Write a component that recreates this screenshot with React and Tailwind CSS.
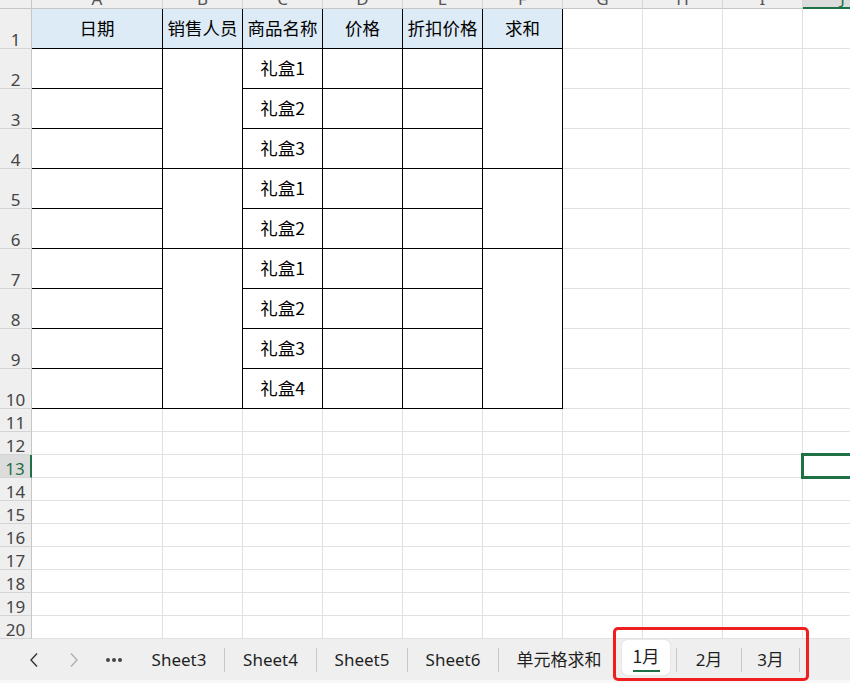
import React from 'react';

const COLS = ['A', 'B', 'C', 'D', 'E', 'F', 'G', 'H', 'I', 'J'];
const HEADINGS = ['日期', '销售人员', '商品名称', '价格', '折扣价格', '求和'];

// rows 2-10: gift box name, plus the merged salesperson / total block that starts on that row
const DATA = [
  { item: '礼盒1', span: 3 },
  { item: '礼盒2' },
  { item: '礼盒3' },
  { item: '礼盒1', span: 2 },
  { item: '礼盒2' },
  { item: '礼盒1', span: 4 },
  { item: '礼盒2' },
  { item: '礼盒3' },
  { item: '礼盒4' },
];

const SPAN = { 2: 'row-span-2', 3: 'row-span-3', 4: 'row-span-4' };

const cjk = "font-['Noto_Sans_CJK_SC',sans-serif]";
const grid = 'border-r border-b border-[#e1e1e1]';
const boxed = 'border-r border-b border-black';

const RowNum = ({ n, active }) => (
  <div
    className={`flex items-end justify-center font-['Noto_Sans',sans-serif] text-[17px] leading-none border-b border-[#d4d4d4] ${
      active
        ? 'bg-[#dcdcdc] text-[#1e7145] border-r-2 border-r-[#1e7145]'
        : 'bg-[#efefef] text-[#444] border-r border-r-[#c6c6c6]'
    }`}
  >
    <span>{n}</span>
  </div>
);

const Cell = ({ children, className = '' }) => (
  <div className={`flex items-center justify-center ${cjk} text-[17.5px] text-black ${className}`}>{children}</div>
);

const Sep = () => <div className="w-px h-[24px] bg-[#c9c9c9]" />;

const Tab = ({ label, w }) => (
  <div className={`${w} flex items-center justify-center font-['Noto_Sans','Noto_Sans_CJK_SC',sans-serif] text-[17px] text-[#1f1f1f]`}>
    {label}
  </div>
);

export default function App() {
  const cells = [];

  // column header strip
  cells.push(<div key="corner" className="bg-[#efefef] border-r border-b border-[#c6c6c6]" />);
  COLS.forEach((c) => {
    const sel = c === 'J';
    cells.push(
      <div
        key={`h${c}`}
        className={`relative overflow-hidden ${
          sel ? 'bg-[#dcdcdc] border-b-2 border-[#1e7145]' : 'bg-[#efefef] border-b border-[#c6c6c6]'
        } border-r border-r-[#d4d4d4]`}
      >
        <span
          className={`absolute inset-x-0 bottom-[1px] text-center font-['Noto_Sans',sans-serif] text-[17px] leading-none ${
            sel ? 'text-[#1e7145]' : 'text-[#555]'
          }`}
        >
          {c}
        </span>
      </div>
    );
  });

  // row 1: headings
  cells.push(<RowNum key="r1" n={1} />);
  HEADINGS.forEach((h) =>
    cells.push(
      <Cell key={`t${h}`} className={`bg-[#ddebf7] ${boxed}`}>
        {h}
      </Cell>
    )
  );
  ['G', 'H', 'I', 'J'].forEach((c) => cells.push(<div key={`1${c}`} className={grid} />));

  // rows 2-10: bordered block
  DATA.forEach((d, i) => {
    const r = i + 2;
    cells.push(<RowNum key={`r${r}`} n={r} />);
    cells.push(<div key={`a${r}`} className={boxed} />);
    if (d.span) cells.push(<div key={`b${r}`} className={`${SPAN[d.span]} ${boxed}`} />);
    cells.push(
      <Cell key={`c${r}`} className={boxed}>
        {d.item}
      </Cell>
    );
    cells.push(<div key={`d${r}`} className={boxed} />);
    cells.push(<div key={`e${r}`} className={boxed} />);
    if (d.span) cells.push(<div key={`f${r}`} className={`${SPAN[d.span]} ${boxed}`} />);
    ['G', 'H', 'I', 'J'].forEach((c) => cells.push(<div key={`${r}${c}`} className={grid} />));
  });

  // rows 11-20: empty sheet
  for (let r = 11; r <= 20; r++) {
    cells.push(<RowNum key={`r${r}`} n={r} active={r === 13} />);
    COLS.forEach((c) => cells.push(<div key={`${r}${c}`} className={grid} />));
  }

  return (
    <div className="relative w-[850px] h-[683px] overflow-hidden bg-white flex flex-col">
      <div className="relative grid grid-cols-[32px_131px_80px_80px_80px_80px_80px_80px_80px_80px_80px] grid-rows-[9px_repeat(10,40px)_repeat(10,23px)] w-[883px] shrink-0">
        {cells}
        {/* active cell J13 */}
        <div className="absolute left-[801px] top-[453px] w-[90px] h-[26px] border-[3px] border-[#1e7145]" />
      </div>

      {/* sheet tabs */}
      <div className="flex items-center h-[41px] bg-[#efefef] shrink-0">
        <div className="w-[14px]" />
        <div className="w-[40px] flex justify-center">
          <svg width="10" height="16" viewBox="0 0 10 16">
            <polyline points="8,1.5 2,8 8,14.5" fill="none" stroke="#333" strokeWidth="1.4" />
          </svg>
        </div>
        <div className="w-[40px] flex justify-center">
          <svg width="10" height="16" viewBox="0 0 10 16">
            <polyline points="2,1.5 8,8 2,14.5" fill="none" stroke="#b0b0b0" strokeWidth="1.4" />
          </svg>
        </div>
        <div className="w-[40px] flex justify-center gap-[2px]">
          <span className="w-[4px] h-[4px] rounded-full bg-[#444]" />
          <span className="w-[4px] h-[4px] rounded-full bg-[#444]" />
          <span className="w-[4px] h-[4px] rounded-full bg-[#444]" />
        </div>
        <Tab label="Sheet3" w="w-[90px]" />
        <Sep />
        <Tab label="Sheet4" w="w-[91px]" />
        <Sep />
        <Tab label="Sheet5" w="w-[90px]" />
        <Sep />
        <Tab label="Sheet6" w="w-[90px]" />
        <Sep />
        <Tab label="单元格求和" w="w-[120px]" />
        <div className="w-[57px] self-stretch pt-px">
          <div className="ml-[3px] w-[48px] h-[35px] bg-white rounded-[5px] shadow-[0_0_1px_rgba(0,0,0,0.25)] flex flex-col items-center pt-[6px]">
            <span className={`${cjk} text-[17.5px] leading-[20px] text-[#1f1f1f]`}>1月</span>
            <div className="mt-[4px] w-[27px] h-[2px] bg-[#1e7145]" />
          </div>
        </div>
        <Sep />
        <Tab label="2月" w="w-[64px]" />
        <Sep />
        <Tab label="3月" w="w-[57px]" />
        <Sep />
      </div>
      <div className="h-[3px] bg-[#f8f8f8]" />

      {/* highlight around the month tabs */}
      <div className="absolute left-[613px] top-[627px] w-[196px] h-[54px] border-[3px] border-[#f01f1f] rounded-[5px]" />
    </div>
  );
}
